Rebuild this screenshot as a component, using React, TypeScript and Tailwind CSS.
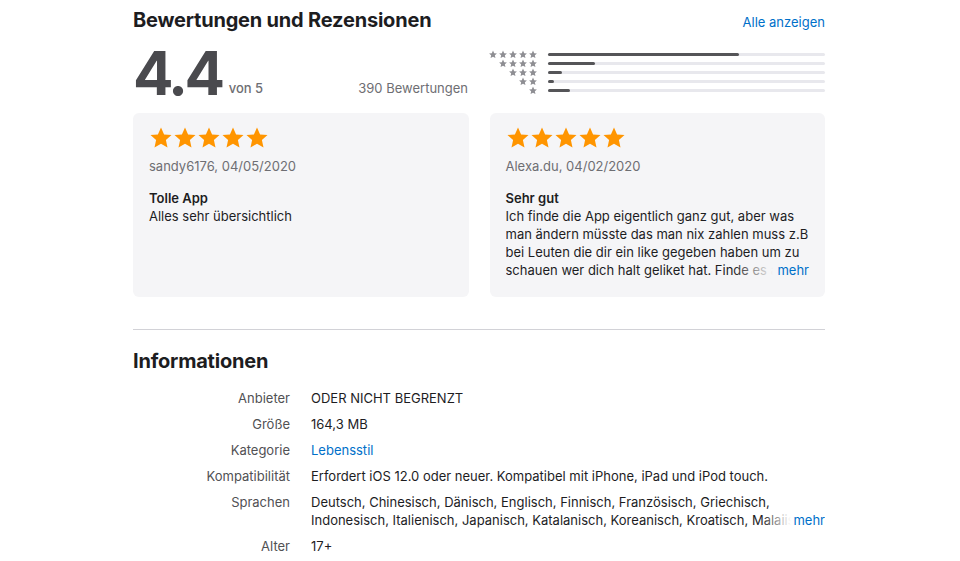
import React from "react";

const FONT = { fontFamily: "Inter, 'Liberation Sans', sans-serif" };

const BARS = [
  { stars: 5, pct: 69 },
  { stars: 4, pct: 17 },
  { stars: 3, pct: 5 },
  { stars: 2, pct: 2 },
  { stars: 1, pct: 8 },
];

const STAR = "12,1.6 15.1,8.4 22.5,9.1 16.9,14.1 18.5,21.5 12,17.7 5.5,21.5 7.1,14.1 1.5,9.1 8.9,8.4";

function Star({ className }: { className: string }) {
  return (
    <svg viewBox="0 0 24 24" className={className} aria-hidden="true">
      <polygon points={STAR} fill="currentColor" />
    </svg>
  );
}

function Stars() {
  return (
    <div className="flex text-[#ff9500]">
      {[0, 1, 2, 3, 4].map((i) => (
        <Star key={i} className="h-[24px] w-[24px]" />
      ))}
    </div>
  );
}

function Review({ author, title, body, more }: { author: string; title: string; body: string; more?: boolean }) {
  return (
    <div className="h-[184px] rounded-[6px] bg-[#f5f5f7] px-[16px] pt-[13px]">
      <Stars />
      <p className="mt-[7px] text-[13px] leading-[18px] text-[#6e6e73]">{author}</p>
      <p className="mt-[14px] text-[13px] font-semibold leading-[18px] text-[#1d1d1f]">{title}</p>
      <div className="relative">
        <p className={`text-[13px] leading-[18px] text-[#1d1d1f] ${more ? "h-[72px] overflow-hidden" : ""}`}>{body}</p>
        {more && (
          <div className="absolute bottom-0 right-0 flex h-[18px]">
            <div className="w-[40px] bg-gradient-to-r from-[#f5f5f7]/0 to-[#f5f5f7]" />
            <span className="bg-[#f5f5f7] pl-[4px] text-[13px] leading-[18px] text-[#0070c9]">mehr</span>
          </div>
        )}
      </div>
    </div>
  );
}

const INFO = [
  { label: "Anbieter", value: "ODER NICHT BEGRENZT" },
  { label: "Größe", value: "164,3 MB" },
  { label: "Kategorie", value: "Lebensstil", link: true },
  { label: "Kompatibilität", value: "Erfordert iOS 12.0 oder neuer. Kompatibel mit iPhone, iPad und iPod touch." },
];

export default function App() {
  return (
    <div className="min-h-[561px] bg-white text-[#1d1d1f]" style={FONT}>
      <div className="ml-[133px] w-[692px]">
        {/* Ratings header */}
        <div className="flex items-end justify-between pt-[7px]">
          <h2 className="text-[20px] font-bold leading-[26px] tracking-[-0.2px]">Bewertungen und Rezensionen</h2>
          <a className="pb-[2px] text-[13px] leading-[18px] text-[#0070c9]">Alle anzeigen</a>
        </div>

        {/* Summary + histogram */}
        <div className="mt-[10px] flex h-[55px]">
          <div className="flex w-[335px] items-end justify-between">
            <div className="flex items-end">
              <span className="text-[60px] font-bold leading-[50px] tracking-[-3.5px] text-[#4a4a4e]">4.4</span>
              <span className="mb-[3px] ml-[7px] text-[13px] font-medium leading-[14px] text-[#6e6e73]">von 5</span>
            </div>
            <span className="mb-[3px] text-[13px] leading-[14px] text-[#6e6e73]">390 Bewertungen</span>
          </div>
          <div className="ml-[20px] flex flex-1 flex-col pt-[7px]">
            {BARS.map((b) => (
              <div key={b.stars} className="flex h-[9px] items-center">
                <div className="flex w-[50px] justify-end text-[#8e8e93]">
                  {Array.from({ length: b.stars }).map((_, i) => (
                    <Star key={i} className="h-[9px] w-[10px]" />
                  ))}
                </div>
                <div className="ml-[10px] h-[3px] flex-1 rounded-full bg-[#e8e8ed]">
                  <div className="h-[3px] rounded-full bg-[#555558]" style={{ width: `${b.pct}%` }} />
                </div>
              </div>
            ))}
          </div>
        </div>

        {/* Reviews */}
        <div className="mt-[15px] grid grid-cols-2 gap-[21px]">
          <Review author="sandy6176, 04/05/2020" title="Tolle App" body="Alles sehr übersichtlich" />
          <Review
            author="Alexa.du, 04/02/2020"
            title="Sehr gut"
            body="Ich finde die App eigentlich ganz gut, aber was man ändern müsste das man nix zahlen muss z.B bei Leuten die dir ein like gegeben haben um zu schauen wer dich halt geliket hat. Finde es aber trotzdem gut und würde sie weiterempfehlen"
            more
          />
        </div>

        <div className="mt-[32px] h-px bg-[#d2d2d7]" />

        {/* Informationen */}
        <h2 className="mt-[18px] text-[20px] font-bold leading-[26px] tracking-[-0.2px]">Informationen</h2>
        <dl className="mt-[15px] flex flex-col gap-[8px] text-[13px] leading-[18px]">
          {INFO.map((r) => (
            <div key={r.label} className="flex">
              <dt className="w-[157px] text-right text-[#515154]">{r.label}</dt>
              <dd className={`ml-[21px] ${r.link ? "text-[#0070c9]" : "text-[#1d1d1f]"}`}>{r.value}</dd>
            </div>
          ))}
          <div className="flex">
            <dt className="w-[157px] text-right text-[#515154]">Sprachen</dt>
            <dd className="relative ml-[21px] h-[36px] w-[514px] overflow-hidden text-[#1d1d1f]">
              Deutsch, Chinesisch, Dänisch, Englisch, Finnisch, Französisch, Griechisch, Indonesisch, Italienisch, Japanisch, Katalanisch, Koreanisch, Kroatisch, Malaiisch, Niederländisch, Norwegisch
              <div className="absolute bottom-0 right-0 flex h-[18px]">
                <div className="w-[30px] bg-gradient-to-r from-white/0 to-white" />
                <span className="bg-white pl-[2px] text-[#0070c9]">mehr</span>
              </div>
            </dd>
          </div>
          <div className="flex">
            <dt className="w-[157px] text-right text-[#515154]">Alter</dt>
            <dd className="ml-[21px] text-[#1d1d1f]">17+</dd>
          </div>
        </dl>
      </div>
    </div>
  );
}
